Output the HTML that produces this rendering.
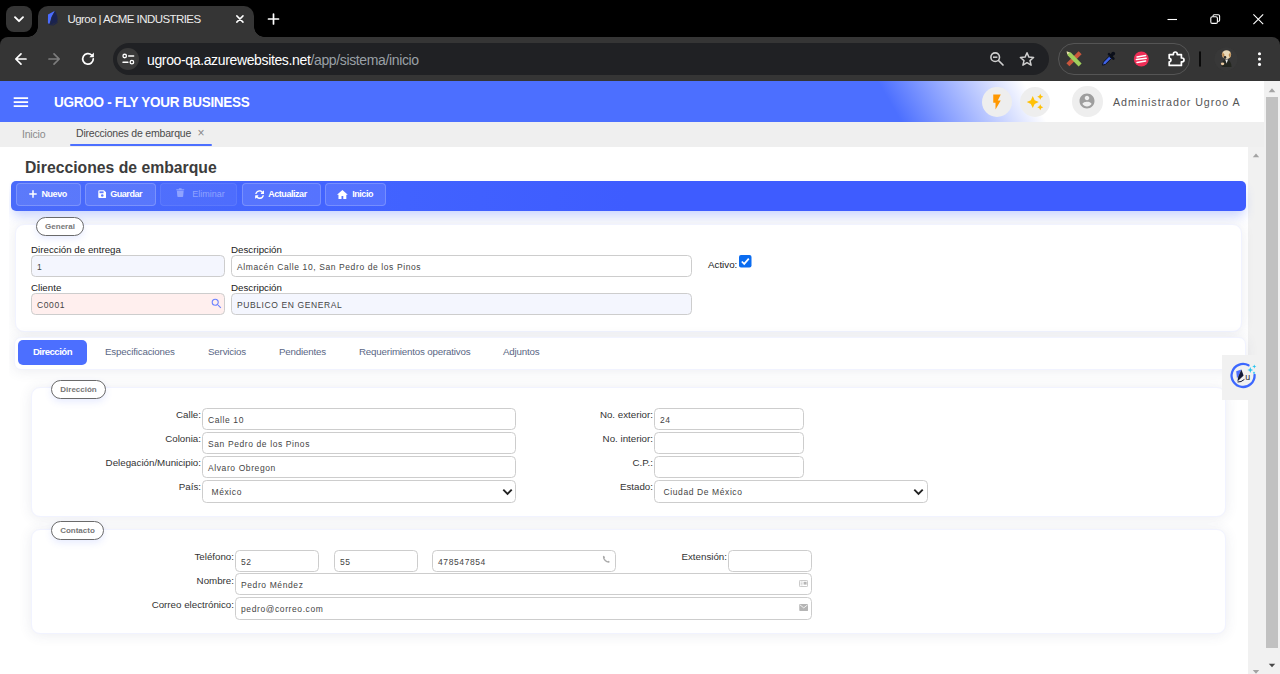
<!DOCTYPE html>
<html lang="es">
<head>
<meta charset="utf-8">
<title>Ugroo | ACME INDUSTRIES</title>
<style>
*{box-sizing:border-box;margin:0;padding:0}
html,body{width:1280px;height:674px;overflow:hidden;background:#fff;font-family:"Liberation Sans",sans-serif;}
body{position:relative}
.abs{position:absolute}
/* ---------- browser chrome ---------- */
#frame{position:absolute;left:0;top:0;width:1280px;height:81px;background:#000}
#toolbar{position:absolute;left:0;top:37px;width:1280px;height:44px;background:#353535;border-radius:8px 8px 0 0}
#tab{position:absolute;left:38px;top:6px;width:216px;height:32px;background:#353535;border-radius:10px 10px 0 0}
#tab:before,#tab:after{content:"";position:absolute;bottom:1px;width:10px;height:10px;background:radial-gradient(circle at 0 0,transparent 9.5px,#353535 10px)}
#tab:before{left:-10px}
#tab:after{right:-10px;background:radial-gradient(circle at 100% 0,transparent 9.5px,#353535 10px)}
#tabsearch{position:absolute;left:6px;top:6px;width:26px;height:26px;border-radius:8px;background:#353535}
#tabtitle{position:absolute;left:67.500px;top:13px;font-size:11.500px;color:#ececec;white-space:nowrap;letter-spacing:-0.570px}
#url{position:absolute;left:112.500px;top:43px;width:936.500px;height:32px;border-radius:16px;background:#202124}
#urlchip{position:absolute;left:117px;top:48px;width:22px;height:22px;border-radius:11px;background:#3a3a3a}
#urltext{position:absolute;left:147px;top:52px;font-size:14px;color:#fff;white-space:nowrap;letter-spacing:-0.36px}
#urltext span{color:#9aa0a6}
#extpill{position:absolute;left:1058px;top:43px;width:132px;height:32px;border-radius:16px;border:1px solid #555}
/* ---------- app ---------- */
#hdr{position:absolute;left:0;top:81px;width:1264px;height:41px;background:linear-gradient(60deg,#4c6fff 0%,#4c6fff 70%,#fff 81.3%)}
#hdr h1{position:absolute;left:54px;top:11.800px;font-size:15px;font-weight:bold;color:#fff;white-space:nowrap;letter-spacing:-0.3px;transform:scaleX(.9);transform-origin:0 50%}
.circ{position:absolute;width:30px;height:30px;border-radius:50%;background:#eee}
#user{position:absolute;left:1113px;top:96px;font-size:10.700px;color:#555;letter-spacing:.95px;white-space:nowrap}
#tabs{position:absolute;left:0;top:122px;width:1264px;height:25px;background:#efefef}
#tabs .t{position:absolute;top:5px;font-size:10.500px;white-space:nowrap;letter-spacing:-0.200px}
#ul{position:absolute;left:70px;top:144px;width:142px;height:2px;background:#4c6fff;border-radius:1px}
#vsb{position:absolute;left:1264px;top:81px;width:16px;height:593px;background:#f1f1f1}
#vsb i{position:absolute;left:2px;top:16px;width:12px;height:551px;background:#c1c1c1}
#isb{position:absolute;left:1248px;top:147px;width:16px;height:527px;background:#f1f1f1}
#main{position:absolute;left:0;top:147px;width:1248px;height:527px;background:#fff;overflow:hidden}
#title{position:absolute;left:25px;top:159px;font-size:15.750px;font-weight:bold;color:#3c3c3c;white-space:nowrap}
#tb{position:absolute;left:11px;top:181px;width:1235px;height:29.5px;background:linear-gradient(90deg,#4a6bfa 0%,#4162ff 32%,#3e5cff 50%,#3e5cff 100%);border-radius:5px;box-shadow:0 7px 11px -2px rgba(76,111,255,.3)}
.btn{position:absolute;top:2px;height:22.500px;border:1px solid rgba(255,255,255,.2);background:rgba(255,255,255,.1);border-radius:4px;color:#fff;font-size:9px;font-weight:bold;white-space:nowrap}
.btn span{position:absolute;top:5px;line-height:10px;letter-spacing:-0.450px}
.btn.dis{border-color:rgba(255,255,255,.08);background:rgba(255,255,255,.05)}
.card{position:absolute;background:#fff;border-radius:9px;border:1px solid #f1f3ff;box-shadow:0 1px 13px rgba(60,70,110,.1)}
.pill{position:absolute;box-shadow:0 3px 7px rgba(76,111,255,.13);height:19px;border:1px solid #6a6a6a;border-radius:10px;background:#fff;font-size:8px;font-weight:bold;color:#777;text-align:center;line-height:17px}
.lbl{position:absolute;font-size:9.75px;color:#222;white-space:nowrap;line-height:12px}
.rl{position:absolute;font-size:9.75px;color:#333;white-space:nowrap;line-height:12px;text-align:right}
.inp{position:absolute;height:22px;border:1px solid #cdcdcd;border-radius:4.500px;background:#fff;font-size:8.5px;letter-spacing:.6px;color:#444;line-height:22px;padding-left:5px;white-space:nowrap}
.tb2{position:absolute;top:346px;font-size:9.750px;color:#5a6785;white-space:nowrap;line-height:12px;letter-spacing:-0.180px}
.inp.sel{padding-left:8.500px;height:22.600px}
.chev{position:absolute}
</style>
</head>
<body>
<!-- browser chrome -->
<div id="frame"></div>
<div id="tabsearch"></div>
<div id="tab"></div>
<div id="toolbar"></div>
<div id="tabtitle">Ugroo | ACME INDUSTRIES</div>
<div id="url"></div><div id="urlchip"></div>
<div id="urltext">ugroo-qa.azurewebsites.net<span>/app/sistema/inicio</span></div>
<div id="extpill"></div>


<!-- chrome icons -->
<svg class="abs" style="left:0;top:0" width="1280" height="80" viewBox="0 0 1280 80" fill="none">
  <!-- tab search chevron -->
  <path d="M15 17.2 L19 21.2 L23 17.2" stroke="#fff" stroke-width="1.9" stroke-linecap="round" stroke-linejoin="round"/>
  <!-- favicon feather -->
  <path d="M55 10.800L48 14.400L47.900 22.800Q48.200 24 49.600 23.600Q50.600 17 55 10.800Z" fill="#4a6cff"/>
  <path d="M55 10.800Q51 17 50 24Q54 24.600 57.400 21.600Q58.200 16 55 10.800Z" fill="#1a2350"/>
  <path d="M49.200 24.600Q53.400 26.400 57.600 22.400" fill="none" stroke="#1a2350" stroke-width="1"/>
  <!-- tab close -->
  <path d="M236.800 15.900L243 22.100M243 15.900L236.800 22.100" stroke="#fff" stroke-width="1.500" stroke-linecap="round"/>
  <!-- new tab plus -->
  <path d="M273.5 14 V24 M268.5 19 H278.5" stroke="#fff" stroke-width="1.7" stroke-linecap="round"/>
  <!-- back -->
  <path d="M26 59 H16 M21 53.8 L15.8 59 L21 64.2" stroke="#fff" stroke-width="1.7" stroke-linecap="round" stroke-linejoin="round"/>
  <!-- forward -->
  <path d="M49 59 H59 M54 53.8 L59.2 59 L54 64.2" stroke="#7d7d7d" stroke-width="1.7" stroke-linecap="round" stroke-linejoin="round"/>
  <!-- reload -->
  <path d="M93.3 58.8 A5.3 5.3 0 1 1 91.6 55" stroke="#fff" stroke-width="1.7" stroke-linecap="round"/>
  <path d="M93.9 52.6 V57.2 H89.3 Z" fill="#fff"/>
  <!-- tune icon -->
  <circle cx="124.700" cy="56" r="1.750" stroke="#fff" stroke-width="1.300"/>
  <path d="M128.700 56H133.600" stroke="#fff" stroke-width="1.500" stroke-linecap="round"/>
  <circle cx="131.900" cy="62.200" r="1.750" stroke="#fff" stroke-width="1.300"/>
  <path d="M123 62.200H127.900" stroke="#fff" stroke-width="1.500" stroke-linecap="round"/>
  <!-- zoom out magnifier -->
  <circle cx="995.200" cy="57.200" r="4.300" stroke="#cfcfcf" stroke-width="1.600"/>
  <path d="M998.500 60.500L1003 65" stroke="#cfcfcf" stroke-width="1.700" stroke-linecap="round"/>
  <path d="M993 57.200H997.400" stroke="#cfcfcf" stroke-width="1.500"/>
  <!-- star -->
  <path d="M1027 52.700L1028.900 57.100L1033.600 57.500L1030 60.600L1031.100 65.200L1027 62.700L1022.900 65.200L1024 60.600L1020.400 57.500L1025.100 57.100Z" stroke="#cfcfcf" stroke-width="1.500" stroke-linejoin="round"/>
  <!-- ext 1 : ruler + pencil -->
  <path d="M1066.400 63.300L1078.600 51.300L1081.600 54.300L1069.400 66.300Z" fill="#c9563c"/>
  <path d="M1066.600 51.600L1070.800 52.600L1081.600 63.400L1078.600 66.400L1067.800 55.600Z" fill="#9fce5c"/>
  <path d="M1066.600 51.600L1069.600 52.300L1067.400 54.500Z" fill="#e9dcae"/>
  <!-- ext 2 : eyedropper -->
  <path d="M1102.5 65.2 L1103.2 62.2 L1109.6 55.8 L1111.8 58 L1105.4 64.4 Z" fill="#3f63e8" stroke="#0b0f1a" stroke-width="1"/>
  <path d="M1109 54.2 L1113.4 58.6 M1110.6 56.6 L1113.2 53.6" stroke="#0b0f1a" stroke-width="2.6" stroke-linecap="round"/>
  <circle cx="1113.2" cy="53.6" r="1.9" fill="#0b0f1a"/>
  <!-- ext 3 : red circle -->
  <circle cx="1141.3" cy="59" r="7.5" fill="#ef2d56"/>
  <path d="M1137 56.9 L1145.6 55.6 M1136.4 59.6 L1146.2 58.3 M1137 62.4 L1145.6 61.1" stroke="#fff" stroke-width="1.5" stroke-linecap="round"/>
  <!-- extensions puzzle -->
  <path d="M1169.2 54.6 H1173.4 V53.9 A1.9 1.9 0 0 1 1177.2 53.9 V54.6 H1181.4 V58 H1182.1 A1.9 1.9 0 0 1 1182.1 61.8 H1181.4 V65.4 H1169.2 V61.9 A1.7 1.7 0 0 0 1169.2 58.3 Z" stroke="#fff" stroke-width="1.7" stroke-linejoin="round"/>
  <!-- separator -->
  <path d="M1200 52 V66" stroke="#000" stroke-width="1.6" stroke-linecap="round"/>
  <!-- avatar -->
  <circle cx="1226" cy="59" r="11.5" fill="#383838"/>
  <ellipse cx="1226.5" cy="54.6" rx="4.6" ry="4.4" fill="#e9d9b8"/>
  <path d="M1222.6 52 Q1221.4 55.5 1223 58 L1224.6 55 Z" fill="#b9854a"/>
  <path d="M1230.4 52 Q1231.6 55.5 1230 58 L1228.6 55 Z" fill="#b9854a"/>
  <path d="M1221.8 67 Q1221.6 60 1226 59 Q1231 59.4 1231.6 67 Z" fill="#23261f"/>
  <path d="M1225.2 59.4 L1226.6 63.6 L1228 59.4 Z" fill="#efefef"/>
  <ellipse cx="1222.6" cy="63.8" rx="1.7" ry="1.4" fill="#e9c9a0"/>
  <circle cx="1225" cy="57.4" r="1.3" fill="#2a2a2a"/>
  <!-- kebab -->
  <circle cx="1259.5" cy="53.8" r="1.55" fill="#fff"/><circle cx="1259.5" cy="59.1" r="1.55" fill="#fff"/><circle cx="1259.5" cy="64.4" r="1.55" fill="#fff"/>
  <!-- window controls -->
  <path d="M1167.5 19.5 H1177" stroke="#fff" stroke-width="1.1"/>
  <rect x="1210.8" y="16.8" width="6.6" height="6.6" rx="1.5" stroke="#fff" stroke-width="1.1"/>
  <path d="M1213 16.4 V15.9 Q1213 14.7 1214.2 14.7 H1218.2 Q1219.6 14.7 1219.6 16.1 V20.2 Q1219.6 21.2 1218.4 21.3 H1217.9" stroke="#fff" stroke-width="1.1"/>
  <path d="M1253.4 14.4 L1263.2 24.2 M1263.2 14.4 L1253.4 24.2" stroke="#fff" stroke-width="1.1"/>
</svg>

<!-- app header -->
<div id="hdr"><h1>UGROO - FLY YOUR BUSINESS</h1></div>
<div class="circ" style="left:982px;top:87px"><svg class="abs" style="left:6px;top:6px" width="18" height="18" viewBox="0 0 24 24"><path d="M7 2v11h3v9l7-12h-4l4-8z" fill="#ff9800"/></svg></div>
<div class="circ" style="left:1020px;top:87px"><svg class="abs" style="left:6px;top:6px" width="18" height="18" viewBox="0 0 24 24"><path d="M19 9l1.250-2.750L23 5l-2.750-1.250L19 1l-1.250 2.750L15 5l2.750 1.250L19 9zm-7.500.500L9 4 6.500 9.500 1 12l5.500 2.500L9 20l2.500-5.500L17 12l-5.500-2.500zM19 15l-1.250 2.750L15 19l2.750 1.250L19 23l1.250-2.750L23 19l-2.750-1.250L19 15z" fill="#ffc107"/></svg></div>
<div class="circ" style="left:1072px;top:86px;width:30.5px;height:30.5px"><svg class="abs" style="left:6.25px;top:6.25px" width="18" height="18" viewBox="0 0 24 24"><path d="M12 2C6.480 2 2 6.480 2 12s4.480 10 10 10 10-4.480 10-10S17.520 2 12 2zm0 3c1.660 0 3 1.340 3 3s-1.340 3-3 3-3-1.340-3-3 1.340-3 3-3zm0 14.200c-2.500 0-4.710-1.280-6-3.220.030-1.990 4-3.080 6-3.080 1.990 0 5.970 1.090 6 3.080-1.290 1.940-3.500 3.220-6 3.220z" fill="#9e9e9e"/></svg></div>
<svg class="abs" style="left:13px;top:96px" width="16" height="12" viewBox="0 0 16 12"><path d="M0.700 2.200H15.100 M0.700 6.100H15.100 M0.700 10.100H15.100" stroke="#fff" stroke-width="1.700"/></svg>
<div id="user">Administrador Ugroo A</div>
<div id="tabs">
  <div class="t" style="left:22px;top:6px;color:#8a8a8a">Inicio</div>
  <div class="t" style="left:76px;color:#4a4a4a">Direcciones de embarque</div>
  <div class="t" style="left:197.500px;top:3.500px;color:#888;font-size:12px">×</div>
</div>
<div id="ul"></div>
<div id="vsb"><i></i></div>
<div id="main"></div>
<div id="isb"></div>
<div id="title">Direcciones de embarque</div>
<div id="tb">
  <div class="btn" style="left:5px;width:65px"><svg class="abs" style="left:12.400px;top:6.400px" width="8" height="8" viewBox="0 0 8 8"><path d="M4 0.300V7.700M0.300 4H7.700" stroke="#fff" stroke-width="1.500"/></svg><span style="left:24.500px">Nuevo</span></div>
  <div class="btn" style="left:74px;width:71px"><svg class="abs" style="left:11.700px;top:6.300px" width="8.500" height="8.200" viewBox="0 0 9 9" preserveAspectRatio="none"><path d="M1.300 0.300H6.300L8.700 2.700V7.700Q8.700 8.700 7.700 8.700H1.300Q0.300 8.700 0.300 7.700V1.300Q0.300 0.300 1.300 0.300Z" fill="#fff"/><rect x="1.600" y="1.500" width="4.300" height="2" fill="#5d7cff"/><circle cx="4.500" cy="6.100" r="1.350" fill="#5d7cff"/></svg><span style="left:24.200px">Guardar</span></div>
  <div class="btn dis" style="left:149px;width:77px"><svg class="abs" style="left:15px;top:4.300px" width="8.500" height="9.300" viewBox="0 0 9 10" preserveAspectRatio="none"><path d="M0.300 1.300H3V0.600Q3 0.200 3.400 0.200H5.600Q6 0.200 6 0.600V1.300H8.700V2.300H0.300ZM0.900 2.900H8.100L7.600 9Q7.550 9.800 6.800 9.800H2.200Q1.450 9.800 1.400 9Z" fill="#8fa3ff"/></svg><span style="left:31.300px;color:#8fa3ff;font-weight:normal;letter-spacing:0">Eliminar</span></div>
  <div class="btn" style="left:231px;width:79px"><svg class="abs" style="left:12.300px;top:6.200px" width="9.200" height="9.200" viewBox="0 0 512 512"><path fill="#fff" d="M370.700 133.300C339.500 104 298.900 88 255.800 88c-77.500.100-144.300 53.200-162.800 126.900-1.300 5.400-6.100 9.200-11.700 9.200H24.100c-7.500 0-13.200-6.800-11.800-14.200C33.900 94.900 134.800 8 256 8c66.400 0 126.800 26.100 171.300 68.700L463 41C478.100 25.900 504 36.600 504 57.900V192c0 13.300-10.700 24-24 24H345.900c-21.400 0-32.100-25.900-17-41l41.800-41.700zM32 296h134.100c21.400 0 32.100 25.900 17 41l-41.800 41.800c31.300 29.300 71.800 45.300 114.900 45.300 77.400-.100 144.300-53.100 162.800-126.800 1.300-5.400 6.100-9.200 11.700-9.200h57.300c7.500 0 13.200 6.800 11.800 14.200C478.100 417.100 377.200 504 256 504c-66.400 0-126.800-26.100-171.300-68.700L49 471c-15.100 15.100-41 4.400-41-16.900V320c0-13.300 10.700-24 24-24z"/></svg><span style="left:25.200px">Actualizar</span></div>
  <div class="btn" style="left:314px;width:61px"><svg class="abs" style="left:11.300px;top:6px" width="10.800" height="9" viewBox="0 0 11 9"><path fill="#fff" d="M5.500 0L11 4.700H9.500V9H6.400V6H4.600V9H1.500V4.700H0Z"/></svg><span style="left:26.200px">Inicio</span></div>
</div>

<!-- General card -->
<div class="card" style="left:15px;top:224px;width:1227px;height:107.500px"></div>
<div class="pill" style="left:36px;top:217px;width:48px">General</div>
<div class="lbl" style="left:31px;top:243.700px">Dirección de entrega</div>
<div class="inp" style="left:31px;top:255.300px;width:194px;background:#f4f6fe">1</div>
<div class="lbl" style="left:231px;top:243.700px">Descripción</div>
<div class="inp" style="left:231px;top:255.300px;width:461px">Almacén Calle 10, San Pedro de los Pinos</div>
<div class="lbl" style="left:708px;top:259px">Activo:</div>
<div class="lbl" style="left:31px;top:282.300px">Cliente</div>
<div class="inp" style="left:31px;top:293px;width:194px;background:#ffefee">C0001</div>
<div class="lbl" style="left:231px;top:282.300px">Descripción</div>
<div class="inp" style="left:231px;top:293px;width:461px;background:#f4f6fe">PUBLICO EN GENERAL</div>

<!-- tabs card -->
<div class="card" style="left:14px;top:337px;width:1231.5px;height:32.500px;border-radius:7px"></div>
<div id="atab" style="position:absolute;left:18px;top:340px;width:69px;height:25px;border-radius:5px;background:#4c6fff;color:#fff;font-size:9.6px;font-weight:bold;text-align:center;line-height:23px;letter-spacing:-0.5px">Dirección</div>
<div class="tb2" style="left:105px">Especificaciones</div>
<div class="tb2" style="left:208px">Servicios</div>
<div class="tb2" style="left:279px">Pendientes</div>
<div class="tb2" style="left:359px">Requerimientos operativos</div>
<div class="tb2" style="left:503px">Adjuntos</div>

<!-- Direccion card -->
<div class="card" style="left:31px;top:386.500px;width:1195px;height:130px"></div>
<div class="pill" style="left:51px;top:380px;width:55px">Dirección</div>
<div class="rl" style="right:1079px;top:409px">Calle:</div>
<div class="inp" style="left:202px;top:408px;width:314px">Calle 10</div>
<div class="rl" style="right:1079px;top:433px">Colonia:</div>
<div class="inp" style="left:202px;top:432px;width:314px">San Pedro de los Pinos</div>
<div class="rl" style="right:1079px;top:457px">Delegación/Municipio:</div>
<div class="inp" style="left:202px;top:456px;width:314px">Alvaro Obregon</div>
<div class="rl" style="right:1079px;top:481px">País:</div>
<div class="inp sel" style="left:202px;top:480px;width:314px">México</div>
<div class="rl" style="right:627px;top:409px">No. exterior:</div>
<div class="inp" style="left:654px;top:408px;width:150px">24</div>
<div class="rl" style="right:627px;top:433px">No. interior:</div>
<div class="inp" style="left:654px;top:432px;width:150px"></div>
<div class="rl" style="right:627px;top:457px">C.P.:</div>
<div class="inp" style="left:654px;top:456px;width:150px"></div>
<div class="rl" style="right:627px;top:481px">Estado:</div>
<div class="inp sel" style="left:654px;top:480px;width:274px">Ciudad De México</div>

<!-- Contacto card -->
<div class="card" style="left:31px;top:528.500px;width:1195px;height:105px"></div>
<div class="pill" style="left:51px;top:521px;width:53px">Contacto</div>
<div class="rl" style="right:1046px;top:550.500px">Teléfono:</div>
<div class="inp" style="left:235px;top:550px;width:84px">52</div>
<div class="inp" style="left:334px;top:550px;width:84px">55</div>
<div class="inp" style="left:432px;top:550px;width:184px">478547854</div>
<div class="rl" style="right:553px;top:550.500px">Extensión:</div>
<div class="inp" style="left:728px;top:550px;width:84px"></div>
<div class="rl" style="right:1046px;top:574.500px">Nombre:</div>
<div class="inp" style="left:235px;top:573px;width:577px">Pedro Méndez</div>
<div class="rl" style="right:1046px;top:598.500px">Correo electrónico:</div>
<div class="inp" style="left:235px;top:597px;width:577px;height:22.500px">pedro@correo.com</div>

<div class="abs" style="left:0;top:147px;width:9px;height:527px;background:#fff"></div>
<!-- extra icons -->
<svg class="abs" style="left:739px;top:255px" width="13" height="13" viewBox="0 0 13 13"><rect x="0" y="0" width="12.500" height="12.500" rx="2" fill="#0b6cf0"/><path d="M2.800 6.500L5.200 8.900L9.800 3.600" fill="none" stroke="#fff" stroke-width="1.700"/></svg>
<svg class="abs" style="left:209.750px;top:296.750px" width="13.200" height="13.200" viewBox="0 0 24 24"><path fill="#6b82ff" d="M15.500 14h-.790l-.280-.270A6.471 6.471 0 0 0 16 9.500 6.500 6.500 0 1 0 9.500 16c1.610 0 3.090-.590 4.230-1.570l.270.280v.790l5 4.990L20.490 19l-4.990-5zm-6 0C7.010 14 5 11.990 5 9.500S7.010 5 9.500 5 14 7.010 14 9.500 11.990 14 9.500 14z"/></svg>
<svg class="abs" style="left:502px;top:487.500px" width="11" height="8" viewBox="0 0 11 8"><path d="M1.300 1.600L5.500 5.800L9.700 1.600" fill="none" stroke="#222" stroke-width="1.900"/></svg>
<svg class="abs" style="left:913px;top:487.500px" width="11" height="8" viewBox="0 0 11 8"><path d="M1.300 1.600L5.500 5.800L9.700 1.600" fill="none" stroke="#222" stroke-width="1.900"/></svg>
<!-- phone / card / mail icons -->
<svg class="abs" style="left:602px;top:555.2px" width="8.5" height="8.5" viewBox="0 0 8 8"><path d="M1.800 0.600Q1 0.700 0.800 1.600Q0.800 4 2.600 5.700Q4.300 7.300 6.500 7.200Q7.300 7 7.400 6.300L5.900 5.300L5.100 5.900Q3.300 5 2.300 3L2.900 2.200Z" fill="#a9a9a9"/></svg>
<svg class="abs" style="left:798.800px;top:579.500px" width="9" height="7" viewBox="0 0 9 7"><rect x="0.400" y="0.400" width="8.200" height="6.200" rx="1" fill="none" stroke="#b5b5b5" stroke-width=".8"/><rect x="4.600" y="1.800" width="3" height="2.800" fill="#b5b5b5"/><path d="M1.600 2H3.600M1.600 3.400H3.600M1.600 4.800H3.600" stroke="#b5b5b5" stroke-width=".6"/></svg>
<svg class="abs" style="left:798.800px;top:604px" width="9.500" height="7" viewBox="0 0 9 7"><rect x="0" y="0" width="9" height="7" rx=".8" fill="#b5b5b5"/><path d="M0.600 0.800L4.500 3.900L8.400 0.800" fill="none" stroke="#fff" stroke-width=".8"/></svg>
<!-- scrollbar arrows -->
<svg class="abs" style="left:1264px;top:81px" width="16" height="593" viewBox="0 0 16 593"><path d="M4.600 11.200L8 7.200L11.400 11.200Z" fill="#a3a3a3"/><path d="M4.800 582.700L8 586.300L11.200 582.700Z" fill="#484848"/></svg>
<svg class="abs" style="left:1248px;top:147px" width="16" height="527" viewBox="0 0 16 527"><path d="M4.800 10.200L8 6.400L11.200 10.200Z" fill="#a3a3a3"/><path d="M4.800 522.900L8 526.700L11.200 522.900Z" fill="#a3a3a3"/></svg>
<!-- floating assistant widget -->
<div class="abs" style="left:1222px;top:355.400px;width:44px;height:44.600px;background:#f1f1f1"></div>
<svg class="abs" style="left:1226px;top:359px" width="34" height="34" viewBox="0 0 34 34">
  <path d="M22.500 6.350A11.500 11.500 0 1 0 28.580 15.900" fill="none" stroke="#3d68ff" stroke-width="2.300" stroke-linecap="round"/>
  <path d="M10.200 12.200L15.400 10.600L12.800 16.500L11 19.600Z" fill="#4c6fff"/>
  <path d="M15.400 10.600L17.600 16.600L11.400 22.400L12.300 17.500Z" fill="#151a36"/>
  <path d="M11.600 23Q15 23.400 18.400 20.400" fill="none" stroke="#151a36" stroke-width="1"/>
  <text x="19.200" y="20.700" font-family="Liberation Sans,sans-serif" font-size="8.800" fill="#1c1c2a">u</text>
  <path d="M24.300 8L25.100 10.200L27.300 11L25.100 11.800L24.300 14L23.500 11.800L21.300 11L23.500 10.200Z" fill="#23c4f0"/>
  <path d="M28.300 5.400L28.900 6.900L30.400 7.500L28.900 8.100L28.300 9.600L27.700 8.100L26.200 7.500L27.700 6.900Z" fill="#23c4f0"/>
  <circle cx="28" cy="13.800" r="1.100" fill="#4fd0f3"/>
</svg>
</body>
</html>
